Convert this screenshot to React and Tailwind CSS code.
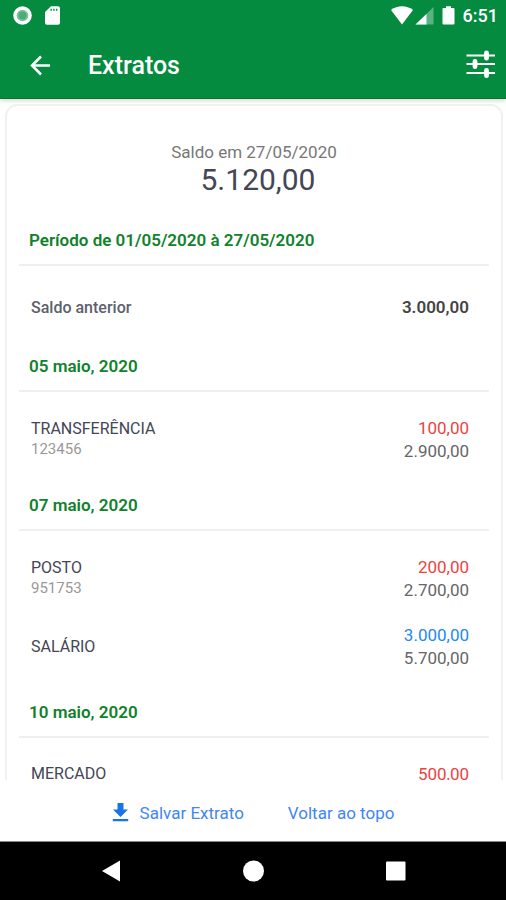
const days = [
  {
    title: 'Período de 01/05/2020 à 27/05/2020',
    entries: [{ name: 'Saldo anterior', balance: '3.000,00', opening: true }],
  },
  {
    title: '05 maio, 2020',
    entries: [{ name: 'TRANSFERÊNCIA', doc: '123456', amount: '100,00', type: 'debit', balance: '2.900,00' }],
  },
  {
    title: '07 maio, 2020',
    entries: [
      { name: 'POSTO', doc: '951753', amount: '200,00', type: 'debit', balance: '2.700,00' },
      { name: 'SALÁRIO', amount: '3.000,00', type: 'credit', balance: '5.700,00' },
    ],
  },
  {
    title: '10 maio, 2020',
    entries: [{ name: 'MERCADO', amount: '500,00', type: 'debit' }],
  },
];

const StatusBar = () => (
  <div className="flex h-8 items-center justify-between pl-3 pr-2">
    <div className="flex items-center gap-3">
      <svg width="20" height="20" viewBox="0 0 20 20" aria-hidden="true">
        <circle cx="10.500" cy="9.500" r="9.300" fill="#fff" />
        <circle cx="10.500" cy="9.500" r="5.800" fill="#7cc29b" />
        <circle cx="10.500" cy="9.500" r="4" fill="#4fab79" />
      </svg>
      <svg width="17" height="20" viewBox="0 0 17 20" aria-hidden="true">
        <path d="M7 .3h7a2 2 0 0 1 2 2v14.500a2 2 0 0 1-2 2H3a2 2 0 0 1-2-2V6z" fill="#fff" />
        <path d="M6.500 2.800h1.400v2H6.500zM9.200 2.800h1.400v2H9.200zM11.900 2.800h1.400v2h-1.400z" fill="#048b40" />
      </svg>
    </div>
    <div className="flex items-center gap-2">
      <div className="flex items-center gap-0.5">
        <svg width="22" height="20" viewBox="0 0 22 20" aria-hidden="true">
          <path d="M11 18.500 0 4Q5 .3 11 .3T22 4z" fill="#fff" />
        </svg>
        <svg width="19" height="20" viewBox="0 0 19 20" aria-hidden="true">
          <path d="M18.500 1v17.500H.5z" fill="#fff" fillOpacity="0.35" />
          <path d="M11.500 8v10.500H.5z" fill="#fff" />
        </svg>
      </div>
      <svg width="13" height="20" viewBox="0 0 13 20" aria-hidden="true">
        <path d="M4 .2h5v1.800h2.500q1 0 1 1v14.500q0 1-1 1h-10q-1 0-1-1V3q0-1 1-1H4z" fill="#fff" />
      </svg>
      <span className="text-lg leading-5 font-medium">6:51</span>
    </div>
  </div>
);

const TopBar = () => (
  <header className="relative z-10 shrink-0 border-b border-[#067a20] bg-[#048b40] text-white shadow-[0_2px_4px_rgba(0,0,0,0.15)]">
    <StatusBar />
    <div className="flex h-[66px] items-center pl-7 pr-[10px]">
      <button type="button" aria-label="Voltar">
        <svg width="24" height="24" viewBox="0 0 24 24" fill="none" stroke="currentColor" strokeWidth="2.500" aria-hidden="true">
          <path d="M22 12.500H4M13 3.500l-9 9 9 9" />
        </svg>
      </button>
      <h1 className="ml-9 flex-1 pt-0.5 text-[25px] leading-8 font-medium">Extratos</h1>
      <button type="button" aria-label="Filtrar">
        <svg width="30" height="30" viewBox="0 0 30 30" fill="none" stroke="currentColor" aria-hidden="true">
          <path d="M.5 5.500H29M.5 14H29M.5 23H29" strokeWidth="2.200" />
          <path d="M20.500 2.800v5.400M9 11.300v5.400M20.500 20.300v5.400" strokeWidth="4.800" strokeLinecap="round" />
        </svg>
      </button>
    </div>
  </header>
);

const Entry = ({ entry }) => {
  if (entry.opening) {
    return (
      <li className="flex h-[55px] items-center justify-between pl-3 pr-5">
        <span className="text-base font-medium text-[#5c616b]">{entry.name}</span>
        <span className="text-[17px] font-semibold text-[#444444]">{entry.balance}</span>
      </li>
    );
  }

  return (
    <li className={`flex justify-between py-[11px] pl-3 pr-5 ${entry.balance ? 'items-center' : 'items-start'}`}>
      <div className="pb-0.5">
        <p className="text-base leading-[21px] text-[#434654]">{entry.name}</p>
        {entry.doc && <p className="text-[15px] leading-[21px] text-[#999999]">{entry.doc}</p>}
      </div>
      <div className="text-right text-[17px] leading-[23px]">
        <p className={entry.type === 'credit' ? 'text-[#2389ec]' : 'text-[#ea4440]'}>{entry.amount}</p>
        {entry.balance && <p className="text-[#666666]">{entry.balance}</p>}
      </div>
    </li>
  );
};

const Day = ({ day }) => (
  <section>
    <h2 className="border-b-2 border-[#efefef] px-[10px] pb-3 text-[17px] leading-6 font-semibold text-[#0f822b]">
      {day.title}
    </h2>
    <ul className="pt-[14px] pb-[19px]">
      {day.entries.map((entry) => (
        <Entry key={entry.name} entry={entry} />
      ))}
    </ul>
  </section>
);

const NavBar = () => (
  <nav className="flex h-[59px] shrink-0 items-center justify-center gap-[120px] border-t border-[#888888] bg-black text-white">
    <button type="button" aria-label="Voltar">
      <svg width="22" height="22" viewBox="0 0 22 22" fill="currentColor" aria-hidden="true">
        <path d="M20 .5v21L2 11z" />
      </svg>
    </button>
    <button type="button" aria-label="Início">
      <svg width="22" height="22" viewBox="0 0 22 22" fill="currentColor" aria-hidden="true">
        <circle cx="11.500" cy="11" r="10.500" />
      </svg>
    </button>
    <button type="button" aria-label="Recentes">
      <svg width="22" height="22" viewBox="0 0 22 22" fill="currentColor" aria-hidden="true">
        <rect x="2" y="1.500" width="19.500" height="19" rx="1" />
      </svg>
    </button>
  </nav>
);

export default function App() {
  return (
    <div className="flex h-screen flex-col bg-white font-['Roboto',sans-serif]">
      <TopBar />

      <main className="flex-1 overflow-hidden pt-[5px] pr-[3px] pl-[5px]">
        <div className="rounded-xl border-2 border-[#f1f1f1] px-3 pt-9">
          <div className="pb-[30px] text-center">
            <p className="text-[17px] leading-5 text-[#777777]">Saldo em 27/05/2020</p>
            <p className="pl-2 text-[30px] leading-9 text-[#434654]">5.120,00</p>
          </div>
          {days.map((day) => (
            <Day key={day.title} day={day} />
          ))}
        </div>
      </main>

      <footer className="flex h-[61px] shrink-0 items-center justify-center gap-11 pt-1.5 text-[17px] text-[#4285f4]">
        <button type="button" className="flex items-center gap-2">
          <svg width="20" height="22" viewBox="0 0 20 22" fill="#1a73e8" aria-hidden="true">
            <path d="M5.500 0h6v6.500h4.500l-7.500 7.500L1 6.500h4.500zM.8 16h15.400v2.200H.8z" />
          </svg>
          Salvar Extrato
        </button>
        <button type="button">Voltar ao topo</button>
      </footer>

      <NavBar />
    </div>
  );
}
